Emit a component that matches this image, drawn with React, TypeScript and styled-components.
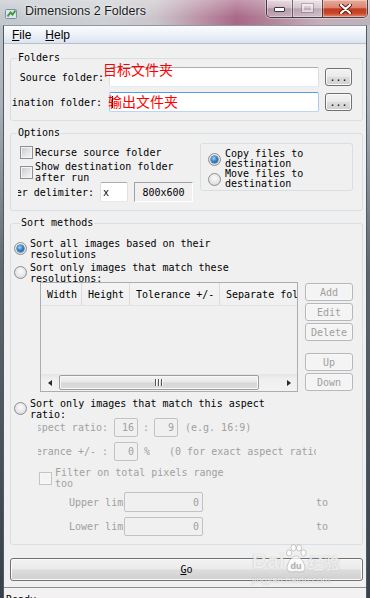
import React from "react";
import styled, { createGlobalStyle, css } from "styled-components";

const MONO = `"DejaVu Sans Mono", "Liberation Mono", monospace`;
const UI = `"Liberation Sans", Arial, sans-serif`;
const CJK = `"Noto Sans CJK SC", sans-serif`;
const DIM = "#a0a0a0";

const GlobalStyle = createGlobalStyle`
  html, body { margin: 0; padding: 0; }
  body {
    width: 370px;
    height: 598px;
    overflow: hidden;
    background: #2d353c;
    font-family: ${MONO};
  }
  * { box-sizing: border-box; }
  u { text-decoration: underline; text-underline-offset: 1px; }
`;

export default function App() {
  return (
    <>
      <GlobalStyle />
      <Window>
        <TitleBar>
          <AppIcon width="13" height="13" viewBox="0 0 13 13">
            <rect x="0.5" y="2.5" width="11" height="9" rx="1" fill="#dde4ec" stroke="#7f8fa2" />
            <path d="M2.5 9.5 L5.5 5.5 L7.5 7.5 L10.5 3.5" stroke="#3f9b3c" strokeWidth="2" fill="none" />
          </AppIcon>
          <Title>Dimensions 2 Folders</Title>
          <Caption>
            <CapButton $kind="min">
              <MinGlyph />
            </CapButton>
            <CapButton $kind="max">
              <MaxGlyph />
            </CapButton>
            <CapButton $kind="close">
              <svg width="13" height="10" viewBox="0 0 13 10">
                <path d="M2 1 L11 9 M11 1 L2 9" stroke="#5a1b10" strokeWidth="4" strokeLinecap="round" />
                <path d="M2 1 L11 9 M11 1 L2 9" stroke="#ffffff" strokeWidth="2.2" strokeLinecap="round" />
              </svg>
            </CapButton>
          </Caption>
        </TitleBar>

        <Frame>
          <Client>
            <MenuBar>
              <MenuItem><u>F</u>ile</MenuItem>
              <MenuItem><u>H</u>elp</MenuItem>
            </MenuBar>

            <Body>
              <Group $pad="3px 0 8px 0">
                <Legend>Folders</Legend>
                <FieldRow $h={20} $ml={1}>
                  <ClipLabel $w={92}><bdi>Source folder:</bdi></ClipLabel>
                  <PathField>
                    <TextBox $w={210} $h={20} />
                    <Note $x={-6} $y={-5}>目标文件夹</Note>
                  </PathField>
                  <Button $w={27} $h={18} $ml={6}>...</Button>
                </FieldRow>
                <FieldRow $h={20} $ml={1} $mt={5}>
                  <ClipLabel $w={92} $end={2}><bdi>Destination folder:</bdi></ClipLabel>
                  <PathField>
                    <TextBox $w={210} $h={20} $state="focus">
                      <Caret />
                    </TextBox>
                    <Note $x={-1} $y={1.5}>输出文件夹</Note>
                  </PathField>
                  <Button $w={27} $h={18} $ml={6}>...</Button>
                </FieldRow>
              </Group>

              <Group $pad="0 0 8px 0" $mt={6}>
                <Legend>Options</Legend>
                <OptionsRow>
                  <OptionsLeft>
                    <Choice $h={13} $gap={2}>
                      <CheckBox />
                      <span>Recurse source folder</span>
                    </Choice>
                    <Choice $gap={2} $mt={2}>
                      <CheckBox />
                      <span>Show destination folder<br />after run</span>
                    </Choice>
                    <FieldRow $h={20} $mt={-1} $ml={-2}>
                      <ClipLabel $w={76}><bdi>Number delimiter:</bdi></ClipLabel>
                      <TextBox $w={28} $h={20} $ml={6}>x</TextBox>
                      <SizeBox>800x600</SizeBox>
                    </FieldRow>
                  </OptionsLeft>
                  <RadioPanel>
                    <Choice $h={20} $gap={4} $lh={10}>
                      <Radio $checked />
                      <span>Copy files to<br />destination</span>
                    </Choice>
                    <Choice $h={20} $gap={4} $lh={10}>
                      <Radio />
                      <span>Move files to<br />destination</span>
                    </Choice>
                  </RadioPanel>
                </OptionsRow>
              </Group>

              <Group $pad="9px 0 8px 3px" $mt={6}>
                <Legend>Sort methods</Legend>
                <Choice $gap={3} $top>
                  <Radio $checked $mt={4} />
                  <span>Sort all images based on their<br />resolutions</span>
                </Choice>
                <Choice $gap={3} $top $mt={2}>
                  <Radio $mt={4} />
                  <span>Sort only images that match these<br />resolutions:</span>
                </Choice>
                <ListArea>
                  <ListView>
                    <HeaderRow>
                      <HeaderCell $w={41}>Width</HeaderCell>
                      <HeaderCell $w={48}>Height</HeaderCell>
                      <HeaderCell $w={90}>Tolerance +/-</HeaderCell>
                      <HeaderCell $w={110}>Separate folder</HeaderCell>
                    </HeaderRow>
                    <ListBody />
                    <HScroll>
                      <ScrollArrow $dir="left" />
                      <Thumb>
                        <Grip />
                      </Thumb>
                      <ScrollArrow $dir="right" />
                    </HScroll>
                  </ListView>
                  <SideButtons>
                    <Button $w={48} $h={18} $disabled>Add</Button>
                    <Button $w={48} $h={18} $disabled>Edit</Button>
                    <Button $w={48} $h={18} $disabled>Delete</Button>
                    <Button $w={48} $h={18} $disabled $mt={10}>Up</Button>
                    <Button $w={48} $h={18} $disabled>Down</Button>
                  </SideButtons>
                </ListArea>
                <Choice $gap={3} $top $mt={6}>
                  <Radio $mt={4} />
                  <span>Sort only images that match this aspect<br />ratio:</span>
                </Choice>
                <FieldRow $h={19} $mt={-2} $ml={24} $dim>
                  <ClipLabel $w={70} $dim><bdi>Aspect ratio:</bdi></ClipLabel>
                  <TextBox $w={24} $h={19} $ml={6} $align="right" $state="disabled">16</TextBox>
                  <Sep>:</Sep>
                  <TextBox $w={24} $h={19} $align="right" $state="disabled">9</TextBox>
                  <Hint $ml={7}>(e.g. 16:9)</Hint>
                </FieldRow>
                <FieldRow $h={19} $mt={5} $ml={24} $dim>
                  <ClipLabel $w={70} $dim><bdi>Tolerance +/- :</bdi></ClipLabel>
                  <TextBox $w={24} $h={19} $ml={6} $align="right" $state="disabled">0</TextBox>
                  <Hint $ml={6}>%</Hint>
                  <Hint $ml={19} $w={147}>(0 for exact aspect ratio)</Hint>
                </FieldRow>
                <Choice $gap={3} $mt={6} $ml={25} $dim>
                  <CheckBox $disabled />
                  <span>Filter on total pixels range<br />too</span>
                </Choice>
                <FieldRow $h={20} $mt={3} $ml={55} $dim>
                  <Hint $w={55}>Upper limit:</Hint>
                  <TextBox $w={79} $h={20} $align="right" $state="disabled">0</TextBox>
                  <Hint $ml={113} $w={14}>to:</Hint>
                </FieldRow>
                <FieldRow $h={19} $mt={5} $ml={55} $dim>
                  <Hint $w={55}>Lower limit:</Hint>
                  <TextBox $w={79} $h={19} $align="right" $state="disabled">0</TextBox>
                  <Hint $ml={113} $w={14}>to:</Hint>
                </FieldRow>
              </Group>

              <Button $h={23} $mt={13}>
                <span><u>G</u>o</span>
              </Button>
            </Body>

            <StatusBar>Ready</StatusBar>
          </Client>
        </Frame>

        <Watermark>
          <WatermarkRow>
            <WmBai>Bai</WmBai>
            <svg width="22" height="30" viewBox="0 0 22 30">
              <g fill="rgba(255,255,255,0.75)" stroke="rgba(130,130,130,0.5)" strokeWidth="0.8">
                <ellipse cx="4" cy="9" rx="2.6" ry="3.2" />
                <ellipse cx="8.5" cy="3.8" rx="2.6" ry="3.2" />
                <ellipse cx="14" cy="3.8" rx="2.6" ry="3.2" />
                <ellipse cx="18.5" cy="9" rx="2.6" ry="3.2" />
                <path d="M11 12 C6 12 2 20 2 24 C2 28 6 28.5 11 27.5 C16 28.5 20 28 20 24 C20 20 16 12 11 12 Z" />
              </g>
              <text x="11" y="25" textAnchor="middle" fontFamily="Liberation Sans, sans-serif" fontWeight="700" fontSize="9" fill="rgba(150,150,150,0.6)">du</text>
            </svg>
            <WmJing>经验</WmJing>
          </WatermarkRow>
          <WmUrl>jingyan.baidu.com</WmUrl>
        </Watermark>
      </Window>
    </>
  );
}

const Window = styled.div`
  position: relative;
  width: 370px;
  height: 598px;
  display: flex;
  flex-direction: column;
  overflow: hidden;
  background: linear-gradient(180deg, #c3c7cc 0%, #a9afb6 18%, #5e666e 45%, #38414a 100%);
`;

const TitleBar = styled.div`
  height: 25px;
  flex-shrink: 0;
  display: flex;
  align-items: flex-start;
  background:
    linear-gradient(180deg, rgba(255, 255, 255, 0.3), rgba(255, 255, 255, 0) 70%),
    linear-gradient(90deg, #c3c8ce 0%, #cdd0d4 28%, #cbc5ca 42%, #bb93a6 54%, #a96887 64%, #b5879b 74%, #c6aeb9 86%, #bdb3ba 100%);
`;

const AppIcon = styled.svg`
  margin: 7px 0 0 5px;
  flex-shrink: 0;
`;

const Title = styled.div`
  margin-left: 7px;
  font: 12.5px/23px ${UI};
  color: #1a1a1a;
  text-shadow: 0 0 6px rgba(255, 255, 255, 0.9), 0 0 2px rgba(255, 255, 255, 0.8);
  white-space: nowrap;
`;

const Caption = styled.div`
  margin-left: auto;
  margin-right: 2px;
  display: flex;
  height: 18px;
  border: 1px solid rgba(35, 35, 45, 0.8);
  border-top: none;
  border-radius: 0 0 5px 5px;
  overflow: hidden;
  box-shadow: 0 0 0 1px rgba(255, 255, 255, 0.35);
`;

const CapButton = styled.div<{ $kind: "min" | "max" | "close" }>`
  display: flex;
  align-items: center;
  justify-content: center;
  height: 100%;
  box-shadow: inset 0 0 0 1px rgba(255, 255, 255, 0.35);
  ${(p) =>
    p.$kind === "min" &&
    css`
      width: 25px;
      align-items: flex-end;
      padding-bottom: 5px;
    `}
  ${(p) =>
    p.$kind === "max" &&
    css`
      width: 30px;
      border-left: 1px solid rgba(35, 35, 45, 0.6);
      align-items: flex-start;
      padding-top: 4px;
    `}
  ${(p) =>
    p.$kind === "close"
      ? css`
          width: 45px;
          border-left: 1px solid rgba(35, 35, 45, 0.7);
          background: linear-gradient(180deg, #e9ab9c 0%, #d98470 46%, #c23a1f 52%, #c9462a 78%, #e58a6b 100%);
        `
      : css`
          background: linear-gradient(180deg, rgba(255, 255, 255, 0.55) 0%, rgba(240, 236, 240, 0.35) 46%, rgba(150, 140, 150, 0.3) 52%, rgba(220, 215, 222, 0.45) 100%);
        `}
`;

const MinGlyph = styled.span`
  width: 11px;
  height: 5px;
  background: #fff;
  border: 1px solid #3a3a44;
  border-radius: 1px;
`;

const MaxGlyph = styled.span`
  width: 11px;
  height: 8px;
  border: 2px solid rgba(255, 255, 255, 0.55);
  outline: 1px solid rgba(90, 90, 100, 0.35);
`;

const Frame = styled.div`
  flex: 1;
  min-height: 0;
  display: flex;
  padding: 0 3px;
`;

const Client = styled.div`
  flex: 1;
  min-width: 0;
  display: flex;
  flex-direction: column;
  background: #f0f0f0;
  border-top: 1px solid #8e99a6;
  border-left: 1px solid #505a64;
  border-right: 1px solid #505a64;
`;

const MenuBar = styled.div`
  height: 18px;
  flex-shrink: 0;
  display: flex;
  padding: 2px 0 0 1px;
  background: linear-gradient(180deg, #fafbfd 0%, #eff3f9 45%, #dce4f0 100%);
  border-bottom: 1px solid #b8c0cf;
  font: 12px/15px ${UI};
  color: #000;
`;

const MenuItem = styled.span`
  padding: 0 7px;
`;

const Body = styled.div`
  flex: 1;
  min-height: 0;
  display: flex;
  flex-direction: column;
  padding: 8px 3px 0 6px;
  font: 10px/11px ${MONO};
  color: #000;
`;

const Group = styled.fieldset<{ $pad: string; $mt?: number }>`
  margin: ${(p) => p.$mt ?? 0}px 0 0 0;
  padding: ${(p) => p.$pad};
  border: 1px solid #d5dfe5;
  border-radius: 3px;
  min-width: 0;
`;

const Legend = styled.legend`
  margin-left: 6px;
  padding: 0 1px;
  font: 10px/12px ${MONO};
  color: #000;
`;

const FieldRow = styled.div<{ $h: number; $mt?: number; $ml?: number; $dim?: boolean }>`
  display: flex;
  align-items: center;
  height: ${(p) => p.$h}px;
  margin-top: ${(p) => p.$mt ?? 0}px;
  margin-left: ${(p) => p.$ml ?? 0}px;
  color: ${(p) => (p.$dim ? DIM : "#000")};
`;

const ClipLabel = styled.span<{ $w: number; $end?: number; $dim?: boolean }>`
  display: block;
  flex-shrink: 0;
  width: ${(p) => p.$w}px;
  padding-right: ${(p) => p.$end ?? 0}px;
  direction: rtl;
  overflow: hidden;
  white-space: nowrap;
  color: ${(p) => (p.$dim ? DIM : "#000")};

  & > bdi {
    direction: ltr;
    unicode-bidi: isolate;
  }
`;

const PathField = styled.div`
  position: relative;
  margin-left: 5px;
  flex-shrink: 0;
`;

const Note = styled.span<{ $x: number; $y: number }>`
  position: absolute;
  left: ${(p) => p.$x}px;
  top: ${(p) => p.$y}px;
  font: 14px/14px ${CJK};
  color: #ff0000;
  white-space: nowrap;
  pointer-events: none;
`;

const TextBox = styled.div<{
  $w: number;
  $h: number;
  $ml?: number;
  $align?: "left" | "right";
  $state?: "normal" | "focus" | "disabled";
}>`
  position: relative;
  flex-shrink: 0;
  display: flex;
  align-items: center;
  justify-content: ${(p) => (p.$align === "right" ? "flex-end" : "flex-start")};
  width: ${(p) => p.$w}px;
  height: ${(p) => p.$h}px;
  margin-left: ${(p) => p.$ml ?? 0}px;
  padding: 0 3px 0 2px;
  border: 1px solid;
  border-radius: 2px;
  ${(p) =>
    p.$state === "focus"
      ? css`
          border-color: #569de5 #a9cdf0 #b9d7f2 #a9cdf0;
          background: #fff;
        `
      : p.$state === "disabled"
        ? css`
            border-color: #c2c2c2;
            background: #f0f0f0;
            color: ${DIM};
          `
        : css`
            border-color: #abadb3 #dbdfe6 #e3e9ef #dbdfe6;
            background: #fff;
          `}
`;

const Caret = styled.span`
  width: 1px;
  height: 12px;
  background: #000;
`;

const Button = styled.div<{ $w?: number; $h: number; $ml?: number; $mt?: number; $disabled?: boolean }>`
  flex-shrink: 0;
  display: flex;
  align-items: center;
  justify-content: center;
  width: ${(p) => (p.$w ? `${p.$w}px` : "auto")};
  height: ${(p) => p.$h}px;
  margin-left: ${(p) => p.$ml ?? 0}px;
  margin-top: ${(p) => p.$mt ?? 0}px;
  border: 1px solid ${(p) => (p.$disabled ? "#b5b9bc" : "#707070")};
  border-radius: 3px;
  color: ${(p) => (p.$disabled ? DIM : "#000")};
  background: ${(p) =>
    p.$disabled
      ? "#f4f4f4"
      : "linear-gradient(180deg, #f2f2f2 0%, #ebebeb 46%, #dddddd 52%, #cfcfcf 100%)"};
  box-shadow: inset 0 0 0 1px ${(p) => (p.$disabled ? "#f7f7f7" : "#fbfbfb")};
`;

const OptionsRow = styled.div`
  display: flex;
  align-items: flex-start;
`;

const OptionsLeft = styled.div`
  display: flex;
  flex-direction: column;
  width: 173px;
  margin-left: 9px;
  padding-top: 7px;
  flex-shrink: 0;
`;

const Choice = styled.div<{ $h?: number; $gap: number; $mt?: number; $ml?: number; $lh?: number; $top?: boolean; $dim?: boolean }>`
  display: flex;
  align-items: ${(p) => (p.$top ? "flex-start" : "center")};
  gap: ${(p) => p.$gap}px;
  height: ${(p) => (p.$h ? `${p.$h}px` : "auto")};
  margin-top: ${(p) => p.$mt ?? 0}px;
  margin-left: ${(p) => p.$ml ?? 0}px;
  line-height: ${(p) => p.$lh ?? 11}px;
  color: ${(p) => (p.$dim ? DIM : "#000")};
  white-space: nowrap;
`;

const CheckBox = styled.span<{ $disabled?: boolean }>`
  flex-shrink: 0;
  width: 13px;
  height: 13px;
  border: 1px solid ${(p) => (p.$disabled ? "#c4c4c4" : "#8e8f8f")};
  background: ${(p) =>
    p.$disabled ? "#f4f4f4" : "linear-gradient(135deg, #c3c7cd 0%, #e4e5e7 55%, #f6f6f6 100%)"};
  box-shadow: inset 0 0 0 1px ${(p) => (p.$disabled ? "#f7f7f7" : "#f4f4f4")};
`;

const Radio = styled.span<{ $checked?: boolean; $mt?: number }>`
  position: relative;
  flex-shrink: 0;
  width: 13px;
  height: 13px;
  margin-top: ${(p) => p.$mt ?? 0}px;
  border-radius: 50%;
  border: 1px solid #8e8f8f;
  background: radial-gradient(circle at 50% 40%, #fbfbfb 0%, #e6e6e6 55%, #c9ccd0 100%);
  ${(p) =>
    p.$checked &&
    css`
      &::after {
        content: "";
        position: absolute;
        left: 2px;
        top: 2px;
        width: 7px;
        height: 7px;
        border-radius: 50%;
        background: radial-gradient(circle at 40% 35%, #a8d8fa 0%, #3384cc 45%, #124f8f 100%);
        box-shadow: 0 0 0 0.5px #1d4f80;
      }
    `}
`;

const SizeBox = styled.div`
  flex-shrink: 0;
  display: flex;
  align-items: center;
  justify-content: center;
  width: 59px;
  height: 20px;
  margin-left: 6px;
  border: 1px solid;
  border-color: #a0a0a0 #ffffff #ffffff #a0a0a0;
  background: #f0f0f0;
`;

const RadioPanel = styled.div`
  flex-shrink: 0;
  width: 153px;
  height: 48px;
  margin: 4px 0 0 7px;
  padding: 5px 0 0 7px;
  border: 1px solid #d5dfe5;
  border-radius: 3px;
  display: flex;
  flex-direction: column;
`;

const ListArea = styled.div`
  display: flex;
  align-items: flex-start;
  margin-top: -2px;
`;

const ListView = styled.div`
  flex-shrink: 0;
  width: 258px;
  height: 110px;
  margin-left: 26px;
  display: flex;
  flex-direction: column;
  border: 1px solid #a9aeb4;
  background: #f0f0f0;
  overflow: hidden;
`;

const HeaderRow = styled.div`
  flex-shrink: 0;
  display: flex;
  height: 23px;
  border-bottom: 1px solid #e3e3e3;
  background: linear-gradient(180deg, #f4f4f4 0%, #f0f0f0 100%);
`;

const HeaderCell = styled.div<{ $w: number }>`
  flex-shrink: 0;
  width: ${(p) => p.$w}px;
  padding-left: 6px;
  line-height: 23px;
  white-space: nowrap;
  overflow: hidden;
  border-right: 1px solid #dcdcdc;
`;

const ListBody = styled.div`
  flex: 1;
`;

const HScroll = styled.div`
  flex-shrink: 0;
  display: flex;
  align-items: center;
  height: 17px;
  background: linear-gradient(180deg, #e4e4e4 0%, #efefef 30%, #f2f2f2 100%);
`;

const ScrollArrow = styled.div<{ $dir: "left" | "right" }>`
  flex-shrink: 0;
  width: 17px;
  height: 17px;
  display: flex;
  align-items: center;
  justify-content: center;

  &::before {
    content: "";
    border-top: 3.5px solid transparent;
    border-bottom: 3.5px solid transparent;
    ${(p) =>
      p.$dir === "left"
        ? css`border-right: 4px solid #2a2a2a;`
        : css`border-left: 4px solid #2a2a2a;`}
  }
`;

const Thumb = styled.div`
  flex-shrink: 0;
  width: 200px;
  height: 15px;
  margin-left: 1px;
  margin-right: auto;
  display: flex;
  align-items: center;
  justify-content: center;
  border: 1px solid #9c9c9c;
  border-radius: 2px;
  background: linear-gradient(180deg, #f3f3f3 0%, #e8e8e8 48%, #d6d6d6 52%, #dcdcdc 100%);
  box-shadow: inset 0 0 0 1px #f8f8f8;
`;

const Grip = styled.span`
  width: 8px;
  height: 7px;
  background: repeating-linear-gradient(90deg, #555 0 1px, #fafafa 1px 2px, transparent 2px 3px);
`;

const SideButtons = styled.div`
  display: flex;
  flex-direction: column;
  gap: 2px;
  margin: 1px 0 0 7px;
`;

const Sep = styled.span`
  flex-shrink: 0;
  width: 16px;
  text-align: center;
`;

const Hint = styled.span<{ $ml?: number; $w?: number }>`
  flex-shrink: 0;
  margin-left: ${(p) => p.$ml ?? 0}px;
  width: ${(p) => (p.$w ? `${p.$w}px` : "auto")};
  overflow: hidden;
  white-space: nowrap;
`;

const StatusBar = styled.div`
  flex-shrink: 0;
  height: 11px;
  padding: 6px 0 0 2px;
  border-top: 1px solid #8f8f8f;
  background: #f3f1f1;
  font: 10px/11px ${MONO};
  color: #000;
  overflow: hidden;
`;

const Watermark = styled.div`
  position: absolute;
  left: 252px;
  top: 544px;
  display: flex;
  flex-direction: column;
  pointer-events: none;
  color: rgba(255, 255, 255, 0.78);
  text-shadow: 0 0 1px rgba(110, 110, 110, 0.5);
`;

const WatermarkRow = styled.div`
  display: flex;
  align-items: flex-end;
  height: 30px;
`;

const WmBai = styled.span`
  font: 700 21px/22px ${UI};
  margin-bottom: 2px;
`;

const WmJing = styled.span`
  font: 700 16px/18px ${CJK};
  margin: 0 0 3px 1px;
`;

const WmUrl = styled.span`
  margin-top: 1px;
  font: 9.5px/10px ${UI};
  letter-spacing: 0.1px;
`;
